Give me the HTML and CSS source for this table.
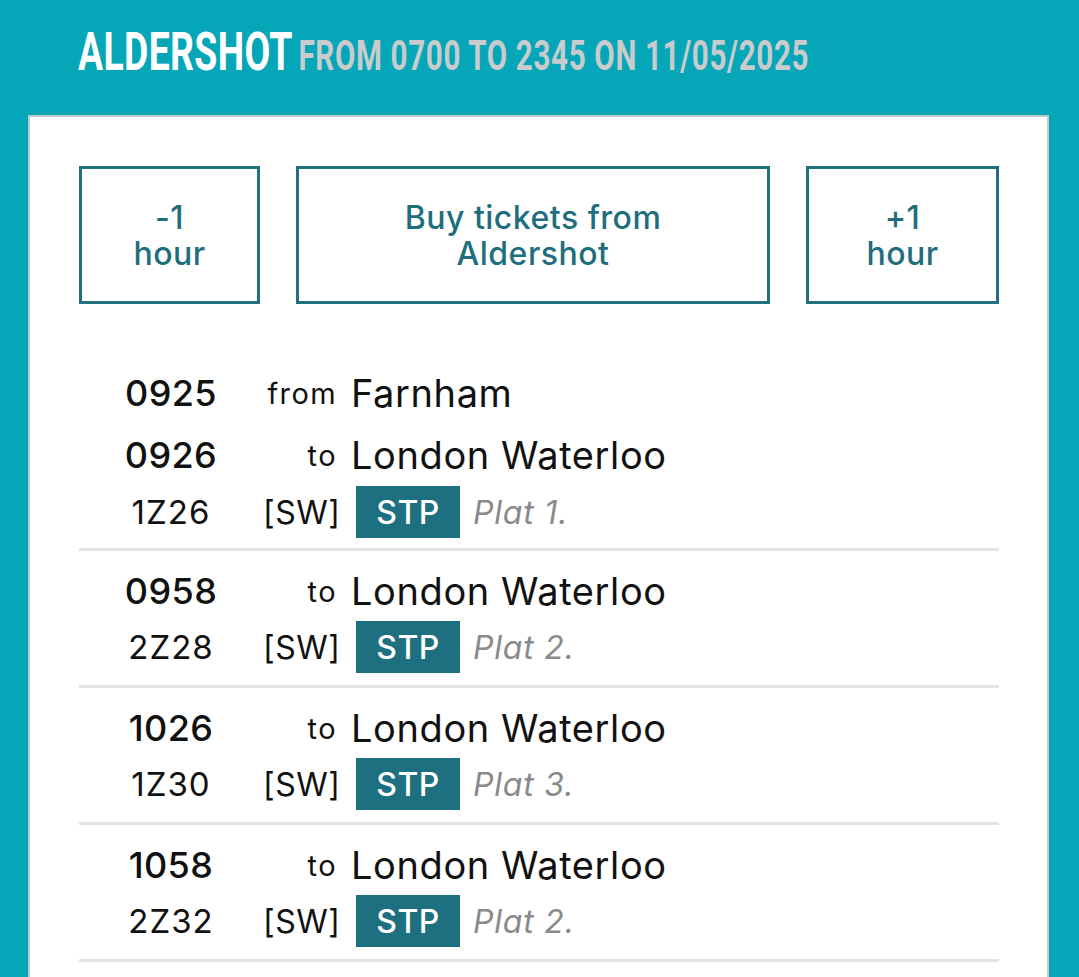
FILE: index.html
```html
<!DOCTYPE html>
<html lang="en">
<head>
<meta charset="utf-8">
<title>Aldershot departures</title>
<link rel="stylesheet" href="styles.css">
</head>
<body>
<header class="top">
  <h1 class="title"><span class="title-inner"><span class="station">ALDERSHOT</span> <span class="range">FROM 0700 TO 2345 ON 11/05/2025</span></span></h1>
</header>
<main class="panel">
  <nav class="buttons">
    <a class="btn" href="#">-1<br>hour</a>
    <a class="btn" href="#">Buy tickets from<br>Aldershot</a>
    <a class="btn" href="#">+1<br>hour</a>
  </nav>
  <ul class="services">
    <li class="service service-3">
      <span class="time">0925</span><span class="dir">from</span><span class="place">Farnham</span>
      <span class="time">0926</span><span class="dir">to</span><span class="place">London Waterloo</span>
      <span class="hc">1Z26</span><span class="toc">[SW]</span><span class="meta"><span class="badge">STP</span><span class="plat">Plat 1.</span></span>
    </li>
    <li class="service">
      <span class="time">0958</span><span class="dir">to</span><span class="place">London Waterloo</span>
      <span class="hc">2Z28</span><span class="toc">[SW]</span><span class="meta"><span class="badge">STP</span><span class="plat">Plat 2.</span></span>
    </li>
    <li class="service">
      <span class="time">1026</span><span class="dir">to</span><span class="place">London Waterloo</span>
      <span class="hc">1Z30</span><span class="toc">[SW]</span><span class="meta"><span class="badge">STP</span><span class="plat">Plat 3.</span></span>
    </li>
    <li class="service">
      <span class="time">1058</span><span class="dir">to</span><span class="place">London Waterloo</span>
      <span class="hc">2Z32</span><span class="toc">[SW]</span><span class="meta"><span class="badge">STP</span><span class="plat">Plat 2.</span></span>
    </li>
  </ul>
</main>
</body>
</html>
```

FILE: styles.css
```css
html, body {
  margin: 0;
  padding: 0;
}
body {
  background: #05a6b8;
  font-family: Inter, "Noto Sans", sans-serif;
  color: #111;
  overflow: hidden;
  height: 977px;
}
.top {
  height: 115px;
  padding-left: 78px;
  box-sizing: border-box;
}
.title {
  margin: 0;
  padding-top: 22px;
  font-family: Roboto, "Liberation Sans", sans-serif;
  font-weight: 700;
  white-space: nowrap;
  line-height: 60px;
  height: 60px;
}
.title-inner {
  display: inline-block;
  transform: scaleX(0.705);
  transform-origin: left center;
}
.station {
  font-size: 53px;
  color: #ffffff;
  letter-spacing: 0.5px;
}
.range {
  font-size: 42px;
  color: #c9cbcc;
  letter-spacing: 0.9px;
}
.panel {
  margin: 0 30px 0 28px;
  background: #ffffff;
  border: 2px solid #c2c9cb;
  border-bottom: none;
  padding: 49px 48px 0 49px;
  min-height: 900px;
}
.buttons {
  display: grid;
  grid-template-columns: 181px 1fr 193px;
  gap: 36px;
}
.btn {
  height: 138px;
  box-sizing: border-box;
  border: 3px solid #23707e;
  display: flex;
  align-items: center;
  justify-content: center;
  text-align: center;
  color: #1f6e7e;
  text-decoration: none;
  font-family: Inter, sans-serif;
  font-size: 32px;
  font-weight: 500;
  line-height: 36px;
  letter-spacing: 0.5px;
  padding-top: 2px;
}
.services {
  list-style: none;
  margin: 48px 0 0;
  padding: 0;
}
.service {
  display: grid;
  grid-template-columns: 184px 74px 1fr;
  grid-template-rows: 60px 52px;
  padding: 10px 0 12px;
  border-bottom: 3px solid #e4e4e4;
  align-items: center;
}
.service-3 {
  grid-template-rows: 62px 62px 52px;
  padding-bottom: 10px;
}
.time {
  text-align: center;
  font-size: 36px;
  font-weight: 500;
  letter-spacing: 0.4px;
}
.dir {
  text-align: right;
  font-size: 29px;
  font-weight: 400;
  letter-spacing: 1.4px;
  white-space: nowrap;
}
.place {
  padding-left: 14px;
  font-size: 38px;
  font-weight: 400;
  letter-spacing: 0.6px;
  white-space: nowrap;
}
.hc {
  text-align: center;
  font-size: 33px;
  font-weight: 400;
  letter-spacing: 1px;
}
.toc {
  text-align: right;
  font-size: 32px;
  letter-spacing: 0.5px;
  white-space: nowrap;
}
.meta {
  display: flex;
  align-items: center;
  gap: 13px;
  padding-left: 19px;
}
.badge {
  width: 104px;
  height: 52px;
  background: #1e6f80;
  color: #ffffff;
  font-size: 32px;
  font-weight: 500;
  letter-spacing: 0.5px;
  display: flex;
  align-items: center;
  justify-content: center;
}
.plat {
  font-size: 32px;
  font-style: italic;
  color: #8a8a8a;
  letter-spacing: 0.8px;
}
```
